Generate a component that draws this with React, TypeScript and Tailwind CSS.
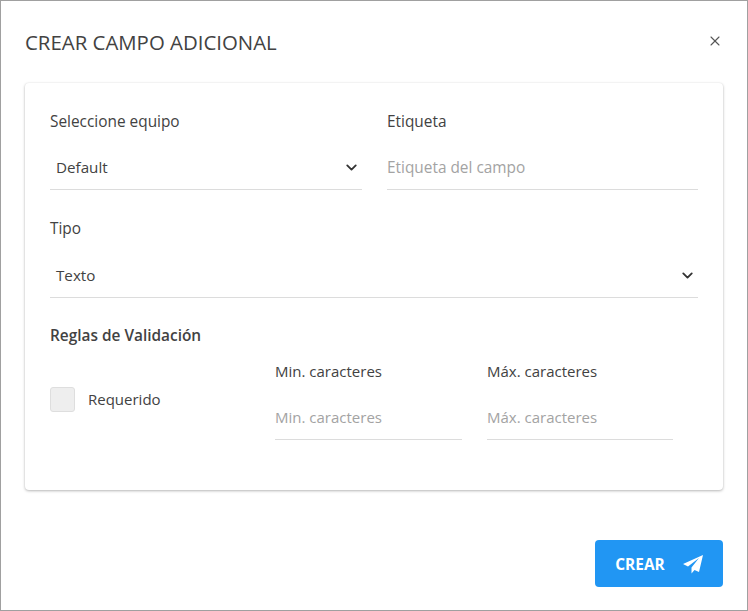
import { ChevronDown, X } from 'lucide-react';

const font = { fontFamily: '"Open Sans", "Noto Sans", sans-serif' };

interface FieldProps {
  label: string;
  text: string;
  className: string;
  labelClass: string;
  valueClass?: string;
}

function TextField({ label, text, className, labelClass, valueClass }: FieldProps) {
  return (
    <div className={className}>
      <div className={`leading-[20px] text-[#424242] ${labelClass}`}>{label}</div>
      <div className={`flex h-[43px] items-center border-b border-[#dcdcdc] text-[#a3a3a3] ${valueClass}`}>{text}</div>
    </div>
  );
}

function SelectField({ label, text, className, labelClass }: FieldProps) {
  return (
    <div className={className}>
      <div className={`leading-[20px] text-[#424242] ${labelClass}`}>{label}</div>
      <div className="flex h-[43px] items-center justify-between border-b border-[#dcdcdc] pb-[2px] pl-[6px] pr-[2px] text-[15.2px] text-[#424242]">
        <span>{text}</span>
        <ChevronDown size={17} strokeWidth={2.6} className="text-[#333333]" />
      </div>
    </div>
  );
}

export default function App() {
  return (
    <div style={font} className="flex h-[611px] w-[748px] flex-col border border-[#a0a0a0] bg-white">
      {/* Cabecera */}
      <div className="flex h-[82px] items-start justify-between px-[24px] pt-[27px]">
        <h1 className="text-[20.4px] leading-[28px] font-normal text-[#424242]">CREAR CAMPO ADICIONAL</h1>
        <X size={16} strokeWidth={1.6} className="mt-[5px] text-[#555555]" />
      </div>

      {/* Tarjeta */}
      <div className="mx-[24px] h-[407px] rounded-[4px] bg-white px-[25px] pt-[27px] shadow-[0_1px_3px_rgba(0,0,0,0.28),0_0_2px_rgba(0,0,0,0.06)]">
        <div className="flex gap-[25px]">
          <SelectField label="Seleccione equipo" text="Default" className="w-[312px]" labelClass="mt-[2px] mb-[15px] text-[15.4px]" />
          <TextField label="Etiqueta" text="Etiqueta del campo" className="w-[311px]" labelClass="mt-[2px] mb-[15px] text-[15.4px]" valueClass="text-[15.4px]" />
        </div>
        <SelectField label="Tipo" text="Texto" className="mt-[29px] w-[648px]" labelClass="mb-[16px] text-[15.4px]" />

        <div className="mt-[27px] h-[22px] text-[15.4px] leading-[22px] font-semibold text-[#424242]">
          Reglas de Validación
        </div>

        <div className="mt-[13px] flex items-start">
          <label className="mt-[27px] flex w-[225px] items-center gap-[13px] text-[15px] text-[#424242]">
            <span className="h-[25px] w-[25px] rounded-[3px] border border-[#dedede] bg-[#eeeeee]" />
            Requerido
          </label>
          <TextField label="Min. caracteres" text="Min. caracteres" className="w-[187px]" labelClass="mt-[1px] mb-[16px] text-[15px]" valueClass="pb-[2px] text-[15px]" />
          <TextField label="Máx. caracteres" text="Máx. caracteres" className="ml-[25px] w-[186px]" labelClass="mt-[1px] mb-[16px] text-[15px]" valueClass="pb-[2px] text-[15px]" />
        </div>
      </div>

      {/* Acciones */}
      <div className="mt-[50px] flex justify-end pr-[24px]">
        <button className="flex h-[47px] w-[128px] items-center justify-center gap-[18px] rounded-[4px] bg-[#2196f3] text-[15.4px] font-bold text-white">
          <span className="pt-[2px]">CREAR</span>
          <svg width="20" height="20" viewBox="0 0 20 20" fill="white">
            <path d="M20 1 L0 10 L5 12.5 L16 4 L8.5 13.5 L8.5 19.5 L11.5 16 L16 18 Z" />
          </svg>
        </button>
      </div>
    </div>
  );
}
